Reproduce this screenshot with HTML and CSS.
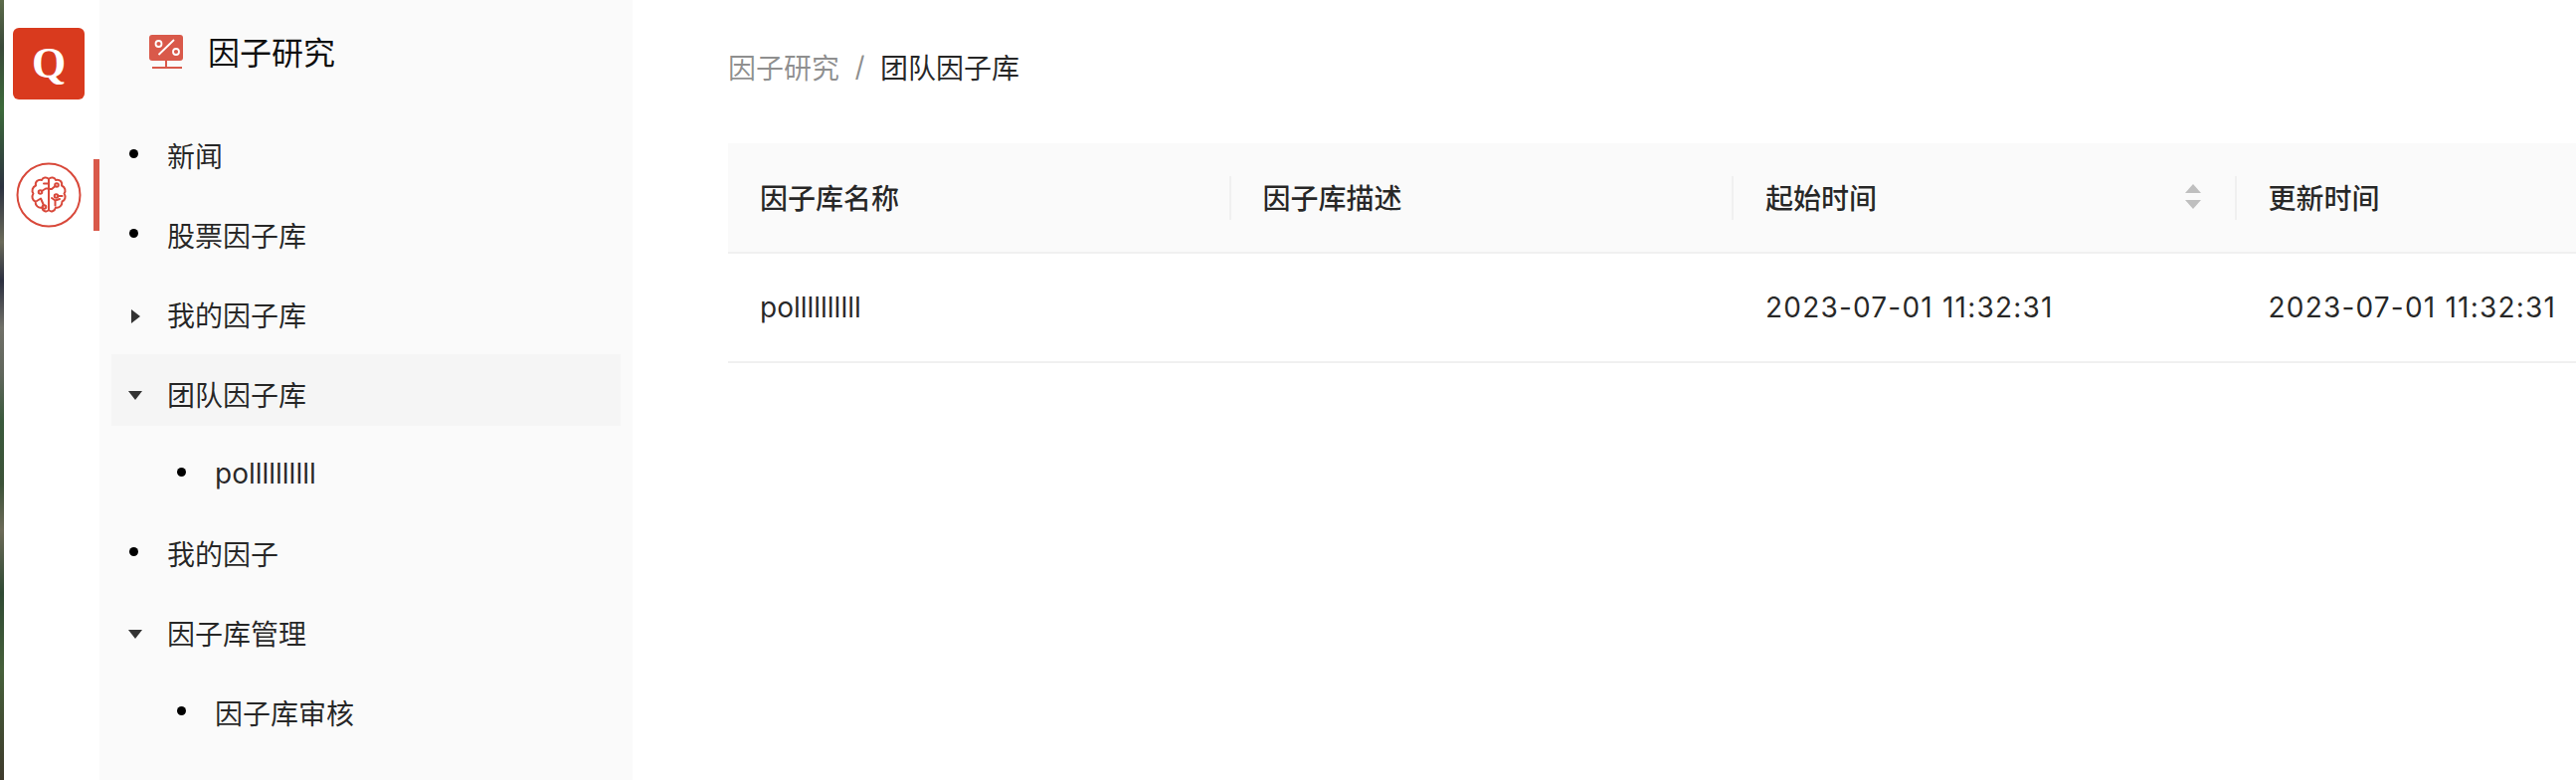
FILE: index.html
```html
<!DOCTYPE html>
<html lang="zh-CN">
<head>
  <meta charset="UTF-8">
  <title>因子研究</title>
  <link rel="stylesheet" href="styles.css">
</head>
<body>
  <div class="wallpaper"></div>

  <!-- Icon rail -->
  <nav class="rail">
    <div class="logo">Q</div>
    <div class="rail-item">
      <svg class="brain" width="66" height="66" viewBox="0 0 66 66" fill="none" stroke="#d8483a" stroke-width="2" stroke-linecap="round" stroke-linejoin="round">
        <circle cx="33" cy="33" r="31.500"/>
        <path d="M33 17C31 14.500 27 15 26 18C22 17 19 20 20 23.500C16.500 25 15.500 29 17.500 31.500C15.500 34.500 16.500 38.500 19.500 39.500C19.500 43.500 22.500 46.500 26 45.500C27 49.500 31 50.500 33 48Z"/>
        <path d="M33 17C35 14.500 39 15 40 18C44 17 47 20 46 23.500C49.500 25 50.500 29 48.500 31.500C50.500 34.500 49.500 38.500 46.500 39.500C46.500 43.500 43.500 46.500 40 45.500C39 49.500 35 50.500 33 48Z"/>
        <path d="M33 17V48"/>
        <circle cx="24.500" cy="30" r="1.800"/>
        <circle cx="28.500" cy="45" r="1.800"/>
        <circle cx="41" cy="23" r="1.800"/>
        <circle cx="40.500" cy="34" r="1.800"/>
        <path d="M26 29L30 26.500H33M28 21.500H33M21 39L25 36.500L28 43.500"/>
        <path d="M39.500 24L36 27H33M42.500 34H46.500M36 36L39.500 38.500V43.500M39.500 38.500L44 37"/>
      </svg>
      <span class="rail-mark"></span>
    </div>
  </nav>

  <!-- Menu panel -->
  <aside class="panel">
    <div class="panel-title">
      <svg width="34" height="36" viewBox="0 0 34 36">
        <rect x="0" y="2" width="34" height="26" rx="3" fill="#d9594a"/>
        <path d="M17 28V34M3 35H33" stroke="#d9594a" stroke-width="2"/>
        <circle cx="9.500" cy="11" r="3" fill="none" stroke="#fff" stroke-width="1.800"/>
        <circle cx="27" cy="19" r="3" fill="none" stroke="#fff" stroke-width="1.800"/>
        <path d="M9.500 22L25 7" stroke="#fff" stroke-width="1.800"/>
      </svg>
      <span>因子研究</span>
    </div>

    <ul class="tree">
      <li class="tree-row"><span class="bullet"></span>新闻</li>
      <li class="tree-row"><span class="bullet"></span>股票因子库</li>
      <li class="tree-row"><span class="caret-right"></span>我的因子库</li>
      <li class="tree-row hover"><span class="caret-down"></span>团队因子库</li>
      <li class="tree-row child"><span class="bullet"></span>pollllllllll</li>
      <li class="tree-row"><span class="bullet"></span>我的因子</li>
      <li class="tree-row"><span class="caret-down"></span>因子库管理</li>
      <li class="tree-row child"><span class="bullet"></span>因子库审核</li>
    </ul>
  </aside>

  <!-- Main content -->
  <main class="content">
    <div class="breadcrumb">
      <span class="crumb-link">因子研究</span>
      <span class="crumb-sep">/</span>
      <span>团队因子库</span>
    </div>

    <table class="factor-table">
      <thead>
        <tr>
          <th><div class="th-inner">因子库名称</div></th>
          <th><div class="th-inner">因子库描述</div></th>
          <th>
            <div class="th-inner">
              起始时间
              <span class="sorter">
                <span class="sort-up"></span>
                <span class="sort-down"></span>
              </span>
            </div>
          </th>
          <th><div class="th-inner">更新时间</div></th>
        </tr>
      </thead>
      <tbody>
        <tr>
          <td>pollllllllll</td>
          <td></td>
          <td class="date">2023-07-01 11:32:31</td>
          <td class="date">2023-07-01 11:32:31</td>
        </tr>
      </tbody>
    </table>
  </main>
</body>
</html>
```

FILE: styles.css
```css
* {
  box-sizing: border-box;
}

html,
body {
  height: 100%;
}

body {
  margin: 0;
  display: flex;
  overflow: hidden;
  background: #fff;
  color: rgba(0, 0, 0, 0.85);
  font-family: "Inter", "Noto Sans CJK SC", sans-serif;
  font-size: 28px;
}

.wallpaper {
  flex: 0 0 4px;
  background: linear-gradient(to bottom, #5c6b4a 0, #3a4a3a 6%, #3c6a3a 14%, #2c3240 24%, #6a6a5a 31%, #2c3040 36%, #707068 42%, #60665c 48%, #3a5a3c 54%, #3c5238 62%, #6c6a58 68%, #2f4a34 76%, #46603a 86%, #3e3a2c 100%);
}

/* Icon rail */
.rail {
  flex: 0 0 96px;
  display: flex;
  flex-direction: column;
  background: #fff;
}

.logo {
  width: 72px;
  height: 72px;
  margin: 28px 0 60px 9px;
  background: #d93a1e;
  border-radius: 6px;
  color: #fff;
  font-family: "Liberation Serif", serif;
  font-weight: bold;
  font-size: 44px;
  line-height: 72px;
  text-align: center;
}

.rail-item {
  display: flex;
  align-items: center;
  justify-content: space-between;
  height: 72px;
  padding-left: 12px;
}

.rail-mark {
  width: 6px;
  height: 72px;
  background: #d9594a;
}

/* Menu panel */
.panel {
  flex: 0 0 536px;
  background: #fafafa;
}

.panel-title {
  display: flex;
  align-items: center;
  gap: 25px;
  height: 104px;
  padding: 0 0 2px 50px;
  color: rgba(0, 0, 0, 0.95);
  font-size: 32px;
}

.tree {
  list-style: none;
  margin: 12px 12px 0;
  padding: 0;
}

.tree-row {
  position: relative;
  display: flex;
  align-items: center;
  height: 72px;
  margin-bottom: 8px;
  padding: 8px 0 0 56px;
}

.tree-row.hover {
  background: #f5f5f5;
}

.tree-row.child {
  padding-left: 104px;
}

.bullet {
  position: absolute;
  left: 18px;
  top: 34px;
  width: 9px;
  height: 9px;
  border-radius: 50%;
  background: #000;
}

.child .bullet {
  left: 66px;
}

.caret-down {
  position: absolute;
  left: 17px;
  top: 37px;
  border-left: 7px solid transparent;
  border-right: 7px solid transparent;
  border-top: 9px solid #333;
}

.caret-right {
  position: absolute;
  left: 20px;
  top: 35px;
  border-top: 7px solid transparent;
  border-bottom: 7px solid transparent;
  border-left: 9px solid #333;
}

/* Main content */
.content {
  flex: 1;
  min-width: 0;
  padding: 0 0 0 96px;
}

.breadcrumb {
  display: flex;
  align-items: center;
  gap: 15.5px;
  height: 144px;
  padding-bottom: 10px;
}

.crumb-link,
.crumb-sep {
  color: rgba(0, 0, 0, 0.45);
}

.factor-table {
  width: 2022px;
  table-layout: fixed;
  border-collapse: collapse;
}

.factor-table th {
  height: 110px;
  padding: 0;
  background: #fafafa;
  border-bottom: 2px solid #f0f0f0;
  font-weight: 500;
  text-align: left;
}

.th-inner {
  display: flex;
  align-items: center;
  justify-content: space-between;
  height: 44px;
  padding: 0 32px 2px;
  border-right: 2px solid #f0f0f0;
}

.factor-table th:last-child .th-inner {
  border-right: none;
}

.factor-table td {
  height: 110px;
  padding: 0 32px;
  border-bottom: 2px solid #f0f0f0;
}

.date {
  letter-spacing: 1.2px;
}

.sorter {
  display: flex;
  flex-direction: column;
  gap: 7px;
  margin-right: 2px;
}

.sort-up {
  border-left: 8px solid transparent;
  border-right: 8px solid transparent;
  border-bottom: 9px solid #bfbfbf;
}

.sort-down {
  border-left: 8px solid transparent;
  border-right: 8px solid transparent;
  border-top: 9px solid #bfbfbf;
}
```
